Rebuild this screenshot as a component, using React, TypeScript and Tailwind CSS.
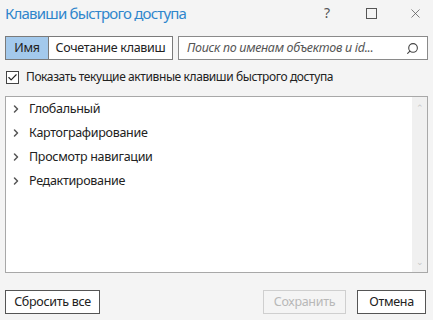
import { ChevronRight, Search, X, Check } from "lucide-react";

const groups = ["Глобальный", "Картографирование", "Просмотр навигации", "Редактирование"];

function TitleBar() {
  return (
    <div className="flex h-[26px] items-center pl-[5px] pr-[10px]">
      <div className="flex-1 text-[15px] leading-none tracking-[-0.8px] text-[#2f86cc]">Клавиши быстрого доступа</div>
      <div className="flex items-center text-[#555]">
        <span className="w-[14px] text-center text-[14px] leading-none">?</span>
        <div className="ml-[32px] size-[11px] border border-[#555]" />
        <X className="ml-[31px] size-[15px]" strokeWidth={1.2} />
      </div>
    </div>
  );
}

function Toolbar() {
  return (
    <div className="mt-[10px] flex h-[24px] px-[5px]">
      <div className="flex h-full border border-[#7a7a7a] text-[12.5px] tracking-[-0.3px] text-[#222]">
        <button type="button" className="w-[43px] border-r border-[#7a7a7a] bg-[#a3c9ec]">
          Имя
        </button>
        <button type="button" className="w-[123px] bg-white">
          Сочетание клавиш
        </button>
      </div>
      <div className="ml-[5px] flex flex-1 items-center border border-[#8a8a8a] bg-white pl-[8px] pr-[8px]">
        <span className="flex-1 text-[12.5px] italic tracking-[-0.3px] text-[#555]">Поиск по именам объектов и id...</span>
        <Search className="size-[13px] -scale-x-100 text-[#444]" strokeWidth={2} />
      </div>
    </div>
  );
}

function Tree() {
  return (
    <div className="mx-[5px] mt-[9px] flex h-[177px] border border-[#a8a8a8] bg-white">
      <div className="flex-1">
        {groups.map((g) => (
          <div key={g} className="flex h-[24px] items-center pl-[4px] text-[12.5px] tracking-[-0.3px] text-[#222]">
            <ChevronRight className="size-[12px] text-[#555]" strokeWidth={3} />
            <span className="ml-[7px]">{g}</span>
          </div>
        ))}
      </div>
      <div className="flex w-[15px] flex-col items-center justify-between bg-[#f0f0f0] py-[6px] text-[#c8c8c8]">
        <span className="text-[9px] leading-none">&#8963;</span>
        <span className="text-[9px] leading-none">&#8964;</span>
      </div>
    </div>
  );
}

export default function App() {
  return (
    <div className="h-[320px] w-[433px] overflow-hidden bg-[#f4f4f4] font-['Noto_Sans',sans-serif]">
      <TitleBar />
      <Toolbar />
      <div className="mt-[7px] flex h-[20px] items-center px-[6px]">
        <div className="flex size-[13px] items-center justify-center border border-[#444] bg-white">
          <Check className="size-[11px] text-[#222]" strokeWidth={2.5} />
        </div>
        <span className="ml-[7px] text-[12px] tracking-[-0.4px] text-[#222]">Показать текущие активные клавиши быстрого доступа</span>
      </div>
      <Tree />
      <div className="mt-[17px] flex h-[24px] px-[5px] text-[12.5px] tracking-[-0.3px]">
        <button type="button" className="w-[95px] border border-[#555] bg-white text-[#222]">
          Сбросить все
        </button>
        <div className="flex-1" />
        <button type="button" className="w-[83px] border border-[#cfcfcf] bg-[#f4f4f4] text-[#b8b8b8]">
          Сохранить
        </button>
        <button type="button" className="ml-[11px] w-[69px] border border-[#555] bg-white text-[#222]">
          Отмена
        </button>
        <div className="w-[2px]" />
      </div>
    </div>
  );
}
